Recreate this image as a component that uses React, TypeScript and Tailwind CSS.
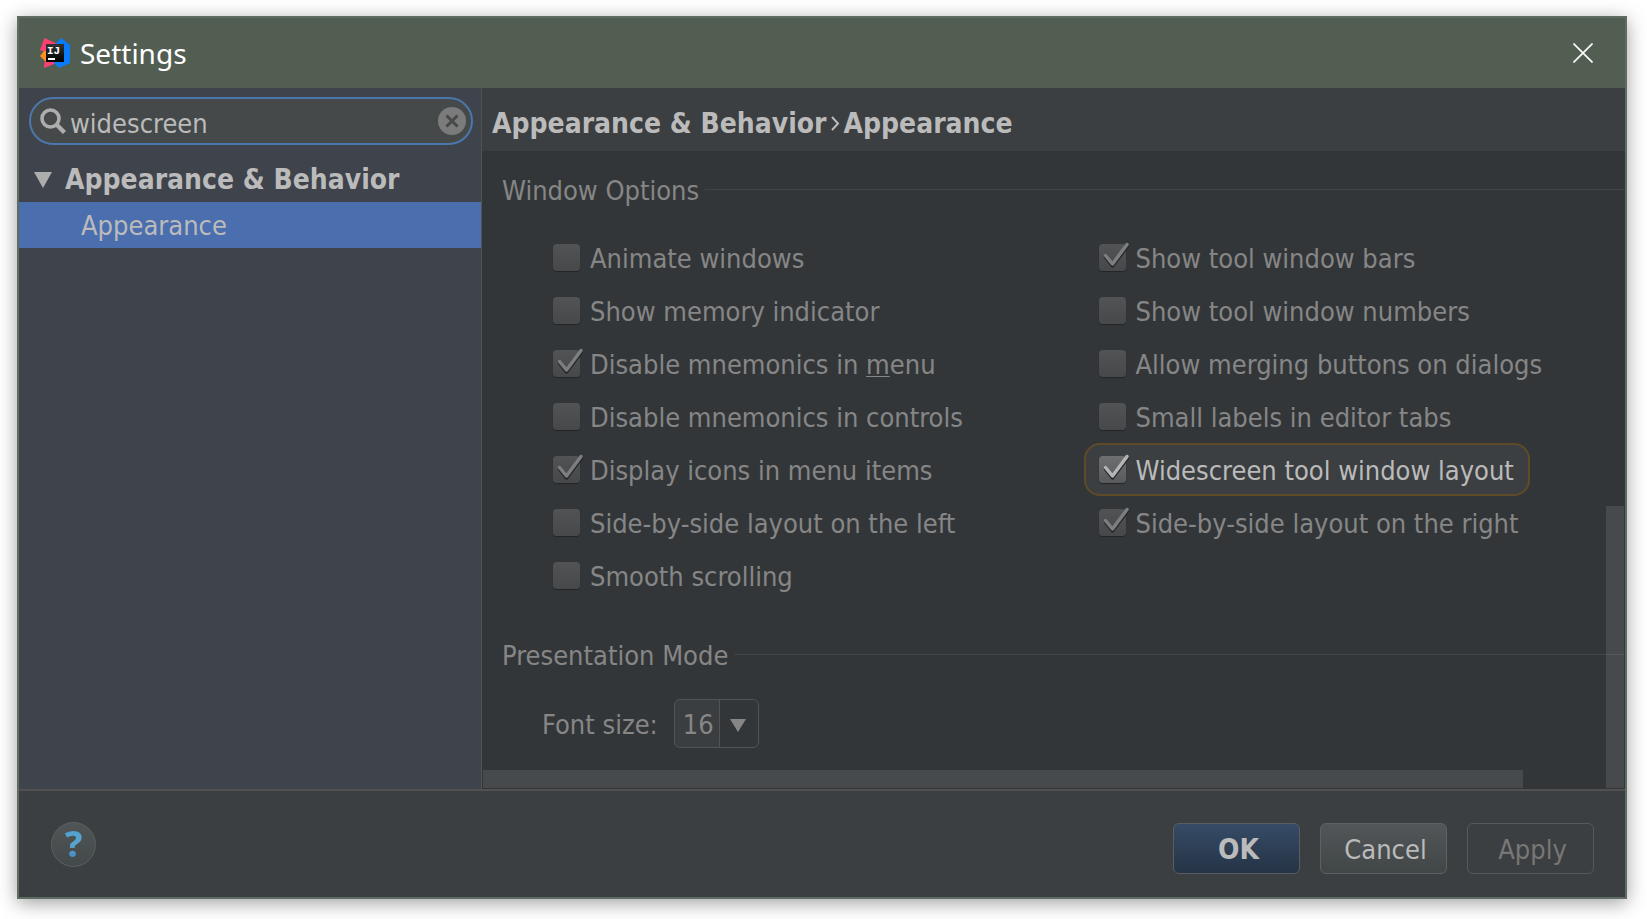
import { useState } from "react";
import clsx from "clsx";

type Option = {
  label: string;
  mnemonic?: string;
  checked?: boolean;
  highlighted?: boolean;
};

// listed row by row, left column first
const windowOptions: Option[] = [
  { label: "Animate windows" },
  { label: "Show tool window bars", checked: true },
  { label: "Show memory indicator" },
  { label: "Show tool window numbers" },
  { label: "Disable mnemonics in menu", mnemonic: "m", checked: true },
  { label: "Allow merging buttons on dialogs" },
  { label: "Disable mnemonics in controls" },
  { label: "Small labels in editor tabs" },
  { label: "Display icons in menu items", checked: true },
  { label: "Widescreen tool window layout", checked: true, highlighted: true },
  { label: "Side-by-side layout on the left" },
  { label: "Side-by-side layout on the right", checked: true },
  { label: "Smooth scrolling" },
];

const Logo = () => (
  <svg viewBox="0 0 30 30" className="size-[30px]" aria-hidden="true">
    <defs>
      <linearGradient id="logo-box" x1="0" y1="0" x2="0" y2="1">
        <stop offset="0" stopColor="#333" />
        <stop offset="1" stopColor="#000" />
      </linearGradient>
    </defs>
    <path d="M0 12L4.500 0 17 6l-2 8H5z" fill="#fe4070" />
    <path d="M4 30l1-10h14v4z" fill="#fe4070" />
    <path d="M0 18l4-5h4v10H5z" fill="#fc8f1d" />
    <path d="M16 5l5-5 9 7v18l-11 5-6-6z" fill="#087cfa" />
    <path d="M6 6h18v18H6z" fill="url(#logo-box)" />
    <text
      x="7"
      y="15.500"
      fill="#fff"
      fontSize="11"
      fontWeight="bold"
      fontFamily="Liberation Mono, monospace"
    >
      IJ
    </text>
    <path d="M8 20h7v2H8z" fill="#fff" />
  </svg>
);

const SectionTitle = ({ children }: { children: string }) => (
  <div className="flex h-8 items-center gap-1.5">
    <h2 className="pt-1">{children}</h2>
    <div className="h-px flex-1 bg-[#404447]" />
  </div>
);

const OptionLabel = ({ label, mnemonic }: Option) => {
  if (!mnemonic) return <span className="pt-0.5">{label}</span>;
  const at = label.lastIndexOf(" " + mnemonic) + 1;
  return (
    <span className="pt-0.5">
      {label.slice(0, at)}
      <u className="decoration-1 underline-offset-2">{mnemonic}</u>
      {label.slice(at + 1)}
    </span>
  );
};

const OptionBox = (props: Option) => (
  <label
    className={clsx(
      "flex h-[53px] w-fit items-center gap-2.5 rounded-2xl border-2 pr-3.5 pl-[13px] whitespace-nowrap",
      props.highlighted
        ? "border-[#5f4b27] bg-[#3c3f41] text-[#bbbbbb]"
        : "border-transparent",
    )}
  >
    <span className="relative size-[27px]">
      <input
        type="checkbox"
        defaultChecked={props.checked}
        className={clsx(
          "peer block size-[27px] appearance-none rounded bg-linear-to-b shadow-[0_1px_1px_#222527]",
          props.highlighted
            ? "from-[#6e6f70] to-[#595a5b]"
            : "from-[#515354] to-[#474849]",
        )}
      />
      <svg
        viewBox="0 0 27 27"
        fill="none"
        strokeWidth="3.5"
        strokeLinecap="round"
        strokeLinejoin="round"
        className="pointer-events-none absolute inset-0 hidden size-[27px] overflow-visible peer-checked:block"
      >
        <path d="M6.500 13l7 9L28.500 2" stroke="#242628" />
        <path
          d="M6.500 11.500l7 8.500L28 0.500"
          stroke={props.highlighted ? "#b4b4b4" : "#7d7e7f"}
        />
      </svg>
    </span>
    <OptionLabel {...props} />
  </label>
);

export default function App() {
  const [query, setQuery] = useState("widescreen");

  return (
    <div className="flex h-screen bg-white pt-4 pr-5 pb-5 pl-[17px] font-['DejaVu_Sans_Condensed','DejaVu_Sans',sans-serif] text-[27px] leading-8 text-[#868686]">
      <div className="flex min-w-0 flex-1 flex-col border-2 border-[#5f6c62] bg-[#3c3f41] shadow-[0_4px_18px_rgba(0,0,0,0.38)]">
        <header className="flex h-[70px] shrink-0 items-center bg-[#535e53] pr-8 pl-[21px]">
          <Logo />
          <h1 className="ml-2.5 flex-1 font-['Noto_Sans',sans-serif] text-[28px] text-white">
            Settings
          </h1>
          <button aria-label="Close" className="text-white">
            <svg viewBox="0 0 20 20" className="size-5" stroke="currentColor" strokeWidth="1.6">
              <path d="M0.500 0.500l19 19M19.500 0.500l-19 19" />
            </svg>
          </button>
        </header>

        <div className="flex min-h-0 flex-1">
          <aside className="w-[463px] shrink-0 border-r border-[#515355] bg-[#3f434c] text-[#bbbbbb]">
            <div className="mt-[9px] mr-2 ml-2.5 flex h-12 items-center rounded-full border-2 border-[#4a78ac] bg-[#45494a] pr-[5px] pl-[9px]">
              <svg viewBox="0 0 26 26" className="size-[26px] shrink-0" fill="none" stroke="#adadad">
                <circle cx="10.500" cy="10.500" r="8.500" strokeWidth="3.600" />
                <path d="M16 16l8.500 8.500" strokeWidth="4.400" />
              </svg>
              <input
                type="text"
                aria-label="Search settings"
                value={query}
                onChange={(e) => setQuery(e.target.value)}
                className="min-w-0 flex-1 bg-transparent pt-1.5 pl-1 outline-none"
              />
              <button aria-label="Clear search" onClick={() => setQuery("")}>
                <svg viewBox="0 0 28 28" className="size-7">
                  <circle cx="14" cy="14" r="14" fill="#7b7b7b" />
                  <path d="M8.500 8.500l11 11M19.500 8.500l-11 11" stroke="#45494a" strokeWidth="3" />
                </svg>
              </button>
            </div>
            <nav className="mt-[11px]">
              <button className="flex h-[46px] w-full items-center pt-0.5 pl-[15px] text-[28px] font-bold">
                <svg viewBox="0 0 18 16" className="mr-[13px] h-4 w-[18px]">
                  <path d="M0 0h18L9 16z" fill="#adadad" />
                </svg>
                Appearance &amp; Behavior
              </button>
              <a href="#appearance" className="flex h-[46px] items-center bg-[#4b6eaf] pt-0.5 pl-[62px]">
                Appearance
              </a>
            </nav>
          </aside>

          <main className="flex min-w-0 flex-1 flex-col">
            <div className="flex h-[63px] shrink-0 items-center pt-2 pl-2.5 text-[28px] font-bold whitespace-nowrap text-[#bbbbbb]">
              Appearance &amp; Behavior
              <svg viewBox="0 0 9 15" className="mx-1 h-[15px] w-[9px]" fill="none" stroke="currentColor" strokeWidth="2">
                <path d="M1 1l6 6.500L1 14" />
              </svg>
              Appearance
            </div>
            <div className="relative flex-1 overflow-hidden bg-[#333639] pt-[22px] pl-5">
              <SectionTitle>Window Options</SectionTitle>
              <div className="mt-[26px] grid grid-cols-2 gap-x-1 pl-9">
                {windowOptions.map((option) => (
                  <OptionBox key={option.label} {...option} />
                ))}
              </div>
              <div className="mt-9">
                <SectionTitle>Presentation Mode</SectionTitle>
              </div>
              <div className="mt-[29px] flex items-center pl-10">
                <label htmlFor="font-size" className="pt-0.5">
                  Font size:
                </label>
                <div className="relative ml-4">
                  <select
                    id="font-size"
                    defaultValue="16"
                    className="h-[49px] w-[85px] appearance-none rounded-md border border-[#505456] bg-linear-to-r from-[#3a3e40] from-[44px] to-[#333639] to-[44px] pt-0.5 pl-2 outline-none"
                  >
                    <option>16</option>
                    <option>18</option>
                    <option>20</option>
                    <option>24</option>
                  </select>
                  <svg
                    viewBox="0 0 40 47"
                    className="pointer-events-none absolute top-px right-0 h-[47px] w-10"
                  >
                    <path d="M.5 0v47" stroke="#505456" />
                    <path d="M11 19h16l-8 13z" fill="#868686" />
                  </svg>
                </div>
              </div>

              {/* overlay scrollbars, content shows through */}
              <div className="absolute right-px bottom-px h-[44.2%] w-[18px] bg-[#fff]/10" />
              <div className="absolute bottom-px left-px h-[18px] w-[91%] bg-[#fff]/10" />
            </div>
          </main>
        </div>

        <footer className="flex h-[108px] shrink-0 items-center border-t-2 border-[#515151] pr-[31px] pl-8">
          <button
            aria-label="Help"
            className="flex size-[45px] items-center justify-center rounded-full border border-[#5c5f60] bg-linear-to-b from-[#505556] to-[#43484a]"
          >
            <span className="bg-linear-to-b from-[#4a9fd0] via-[#5aa5cf] to-[#3a80bd] bg-clip-text font-['Noto_Sans',sans-serif] text-4xl font-extrabold text-transparent">
              ?
            </span>
          </button>
          <div className="mt-2 ml-auto flex gap-5">
            <button className="h-[51px] w-[127px] rounded-md border border-[#5a5d60] bg-linear-to-b from-[#364b66] to-[#253446] pt-1 pl-1 text-[28px] font-bold text-[#bbbbbb]">
              OK
            </button>
            <button className="h-[51px] w-[127px] rounded-md border border-[#5e6162] bg-linear-to-b from-[#525658] to-[#414647] pt-1 pl-1 text-[#bbbbbb]">
              Cancel
            </button>
            <button disabled className="h-[51px] w-[127px] rounded-md border border-[#57595b] pt-1 pl-1 text-[#777777]">
              Apply
            </button>
          </div>
        </footer>
      </div>
    </div>
  );
}
